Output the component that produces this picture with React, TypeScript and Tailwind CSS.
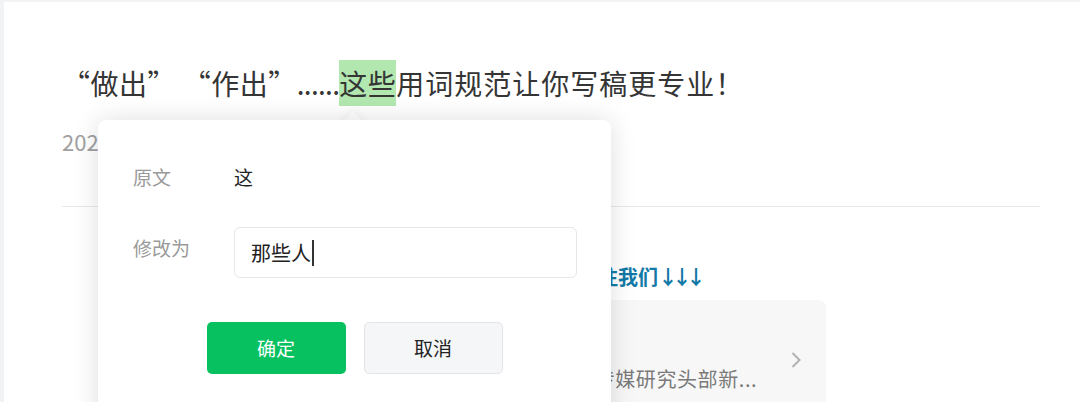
const cjk = "font-['Noto_Sans_CJK_SC','Noto_Sans',sans-serif]";

const EditPopover = () => {
  return (
    <div className="absolute left-[98px] top-[120px] w-[513px]">
      {/* arrow pointing at the highlighted words */}
      <div className="absolute left-[248px] top-[-6px] h-[14px] w-[14px] rotate-45 bg-white shadow-[0_0_10px_rgba(0,0,0,0.08)]" />
      <div className="relative h-[320px] rounded-lg bg-white pl-[35px] pr-[34px] pt-[43px] shadow-[0_0_26px_rgba(0,0,0,0.13)]">
        <div className="flex items-center text-[19px] leading-[28px]">
          <span className="w-[101px] text-[#9a9a9a]">原文</span>
          <span className="text-[#222]">这</span>
        </div>
        <div className="mt-[36px] flex items-start text-[19px]">
          <span className="mt-[7px] w-[101px] leading-[28px] text-[#9a9a9a]">
            修改为
          </span>
          <div className="flex h-[51px] flex-1 items-center rounded-md border border-[#e6e6e6] pl-[16px] text-[20px] text-[#222]">
            那些人
            <span className="ml-[1px] h-[26px] w-[2px] bg-[#333]" />
          </div>
        </div>
        <div className="ml-[-35px] mr-[-34px] mt-[44px] flex justify-center gap-[18px] text-[19px]">
          <button className="h-[52px] w-[139px] rounded-[5px] bg-[#07c160] text-white">
            确定
          </button>
          <button className="h-[52px] w-[139px] rounded-[5px] border border-[#e4e4e6] bg-[#f5f6f7] text-[#222]">
            取消
          </button>
        </div>
      </div>
    </div>
  );
};

export default function App() {
  return (
    <div
      className={`relative h-[402px] w-[1080px] overflow-hidden bg-[#f2f3f5] pl-[4px] pt-[2px] ${cjk}`}
    >
      <div className="h-full bg-white pl-[58px] pr-[40px] pt-[58px]">
        <h1 className="text-[28px] font-normal leading-[46px] tracking-[0.5px] text-[#353535]">
          “做出” “作出”<span className="tracking-[-0.7px]">......</span>
          <span className="bg-[#b2e8b0] py-[3px]">这些</span>
          <span className="tracking-[1px]">用词规范让你写稿更专业！</span>
        </h1>
        <p className="mt-[20px] text-[22px] leading-[30px] text-[#a0a0a0]">
          2023-04-18 17:30 发表于北京
        </p>
        <div className="mt-[50px] border-t border-[#e7e8ec]" />
        <div className="mx-auto w-[550px] pt-[56px]">
          <p className="pr-[126px] text-right text-[20px] font-bold leading-[28px] text-[#1379a6]">
            扫码或长按名片立刻关注我们
            <span className="tracking-[-6px]">↓↓↓</span>
          </p>
          <div className="mt-[9px] flex h-[120px] items-center rounded-lg bg-[#f7f7f7] pl-[24px] pr-[24px]">
            <div className="h-[56px] w-[56px] shrink-0 rounded-full bg-[#dcdcdc]" />
            <div className="ml-[12px] min-w-0 flex-1 overflow-hidden">
              <p className="text-[19px] leading-[28px] text-[#222]">传媒茶话会</p>
              <p className="mt-[9px] whitespace-nowrap text-[20px] leading-[28px] tracking-[0.6px] text-[#7a7a7a]">
                国内领先的新闻出版行业传媒研究头部新...
              </p>
            </div>
            <svg
              width="12"
              height="18"
              viewBox="0 0 12 18"
              className="ml-[24px] shrink-0"
            >
              <path
                d="M2.5 2 L9.5 9 L2.5 16"
                fill="none"
                stroke="#b2b2b2"
                strokeWidth="2"
              />
            </svg>
          </div>
        </div>
      </div>
      <EditPopover />
    </div>
  );
}
